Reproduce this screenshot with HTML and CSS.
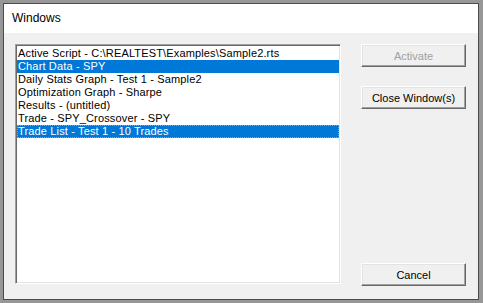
FILE: index.html
```html
<!DOCTYPE html>
<html lang="en">
<head>
<meta charset="UTF-8" />
<title>Windows</title>
<link rel="stylesheet" href="styles.css">
</head>
<body>
<div class="dialog">
    <div class="titlebar">Windows</div>

    <div class="dialog-body">
        <!-- list of open windows -->
        <ul class="listbox">
            <li>Active Script - C:\REALTEST\Examples\Sample2.rts</li>
            <li class="selected">Chart Data - SPY</li>
            <li>Daily Stats Graph - Test 1 - Sample2</li>
            <li>Optimization Graph - Sharpe</li>
            <li>Results - (untitled)</li>
            <li>Trade - SPY_Crossover - SPY</li>
            <li class="selected focused">Trade List - Test 1 - 10 Trades</li>
        </ul>

        <!-- buttons -->
        <div class="actions">
            <button disabled>Activate</button>
            <button>Close Window(s)</button>
            <button class="cancel">Cancel</button>
        </div>
    </div>
</div>
</body>
</html>
```

FILE: styles.css
```css
/* ========  RESET  ======== */
*, *::before, *::after { box-sizing: border-box; margin: 0; padding: 0; }

body {
    background: #979797;
    padding: 3px;
    font-family: "Liberation Sans", Arial, sans-serif;
    font-size: 11px;
    color: #000;
}

/* ========  WINDOW FRAME  ======== */
.dialog {
    width: 476px;
    height: 297px;
    border: 1px solid #4b4b4b;
    background: #f0f0f0;
    display: flex;
    flex-direction: column;
}
.titlebar {
    height: 29px;
    background: #fff;
    padding-left: 8px;
    font-size: 12px;
    line-height: 29px;
    color: #000;
}
.dialog-body {
    flex: 1;
    display: flex;
    gap: 20px;
    padding: 11px 12px 13px 11px;
}

/* ========  LIST BOX  ======== */
.listbox {
    list-style: none;
    width: 326px;
    height: 240px;
    background: #fff;
    border: 1px solid;
    border-color: #a0a0a0 #fff #fff #a0a0a0;
    box-shadow: inset 1px 1px #696969, inset -1px -1px #e3e3e3;
    padding: 2px 1px 1px 1px;
    letter-spacing: .15px;
}
.listbox li {
    height: 13px;
    line-height: 13px;
    padding-left: 1px;
    white-space: nowrap;
}
.listbox li.selected {
    background: #0078d7;
    color: #fff;
}
.listbox li.focused {
    outline: 1px dotted #ff8728;
    outline-offset: -1px;
}

/* ========  BUTTONS  ======== */
.actions {
    width: 105px;
    display: flex;
    flex-direction: column;
    gap: 19px;
}
button {
    height: 23px;
    font-family: inherit;
    font-size: 11px;
    color: #000;
    background: #f0f0f0;
    border: 1px solid;
    border-color: #fff #696969 #696969 #fff;
    box-shadow: inset -1px -1px #a0a0a0, inset 1px 1px #e3e3e3;
}
button:disabled { color: #a0a0a0; }
.cancel { margin-top: auto; }
```
